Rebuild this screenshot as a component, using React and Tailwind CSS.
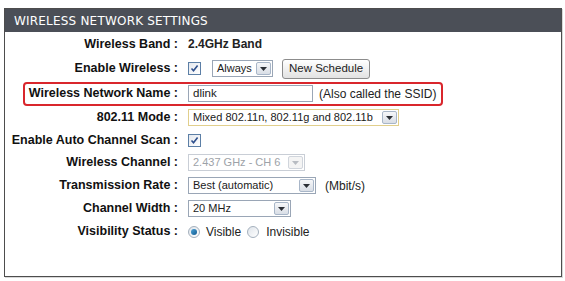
import React from 'react';

const labelFont = { fontFamily: '"Liberation Sans", Arial, sans-serif' };

const Arrow = ({ disabled }) => (
    <span className={`flex items-center justify-center w-[15px] h-[13px] mr-[1px] border rounded-[2px] ${disabled ? 'border-[#d0d5dc] bg-[#f4f4f4]' : 'border-[#a8b6c8] bg-gradient-to-b from-[#f6f7f9] to-[#d9dee6]'}`}>
        <svg width="7" height="4" viewBox="0 0 7 4">
            <path d="M0 0h7L3.5 4z" fill={disabled ? '#b8bcc2' : '#2b2f36'} />
        </svg>
    </span>
);

const Select = ({ value, width, disabled, warm }) => (
    <div
        className={`flex items-center justify-between h-[17px] bg-white border ${warm ? 'border-[#e1cf8c]' : disabled ? 'border-[#c9ced6]' : 'border-[#9aa6b6]'}`}
        style={{ width }}
    >
        <span className={`pl-[4px] text-[11px] leading-none whitespace-nowrap ${disabled ? 'text-[#9da2a8]' : 'text-[#1a1a1a]'}`}>{value}</span>
        <Arrow disabled={disabled} />
    </div>
);

const Checkbox = () => (
    <span className="flex items-center justify-center w-[13px] h-[13px] border border-[#5c7fa6] bg-gradient-to-br from-[#e4e8ee] to-white">
        <svg width="9" height="9" viewBox="0 0 9 9">
            <path d="M1.5 4.5l2 2.2L7.6 1.4" stroke="#2e4f8c" strokeWidth="1.6" fill="none" />
        </svg>
    </span>
);

const Radio = ({ checked }) => (
    <span className="flex items-center justify-center w-[12px] h-[12px] rounded-full border border-[#a4b0bd] bg-gradient-to-br from-[#dfe4ea] to-white">
        {checked && <span className="w-[6px] h-[6px] rounded-full bg-gradient-to-br from-[#4aa2d6] to-[#0f5b91]" />}
    </span>
);

const Row = ({ label, h, children }) => (
    <div className="flex items-center" style={{ height: h }}>
        <div className="w-[173px] shrink-0 text-right text-[12.5px] font-bold text-[#111] whitespace-nowrap" style={labelFont}>{label}</div>
        <div className="ml-[10px] flex items-center">{children}</div>
    </div>
);

const App = () => {
    return (
        <div className="w-[565px] h-[281px] bg-white pt-[8px] pl-[4px]" style={labelFont}>
            <div className="w-[558px] h-[269px] border border-[#4d4d4d] shadow-[1px_1px_0_#d8d8d8]">
                <div className="h-[23px] bg-[#4b4f57] flex items-center pl-[9px]">
                    <span className="text-white text-[12px] tracking-[0.2px]" style={{ fontFamily: '"DejaVu Sans", Verdana, sans-serif' }}>WIRELESS NETWORK SETTINGS</span>
                </div>

                <Row label="Wireless Band :" h={24}>
                    <span className="text-[12px] font-bold text-[#222]">2.4GHz Band</span>
                </Row>

                <Row label="Enable Wireless :" h={25}>
                    <Checkbox />
                    <div className="ml-[11px]"><Select value="Always" width={61} /></div>
                    <button type="button" className="ml-[9px] h-[20px] px-[6px] rounded-[3px] border border-[#8c8c8c] bg-gradient-to-b from-white to-[#e2e2e2] text-[11.5px] text-[#222]">
                        New Schedule
                    </button>
                </Row>

                <div className="relative">
                    <div className="absolute left-[18px] top-[1px] w-[420px] h-[24px] border-2 border-[#d9262c] rounded-[4px] pointer-events-none" />
                    <Row label="Wireless Network Name :" h={25}>
                        <div className="w-[125px] h-[17px] border border-[#9aa6b6] bg-white flex items-center pl-[4px] text-[11.5px] text-[#1a1a1a]">dlink</div>
                        <span className="ml-[6px] text-[12px] text-[#222]">(Also called the SSID)</span>
                    </Row>
                </div>

                <Row label="802.11 Mode :" h={23}>
                    <Select value="Mixed 802.11n, 802.11g and 802.11b" width={211} warm />
                </Row>

                <Row label="Enable Auto Channel Scan :" h={22}>
                    <Checkbox />
                </Row>

                <Row label="Wireless Channel :" h={23}>
                    <Select value="2.437 GHz - CH 6" width={117} disabled />
                </Row>

                <Row label="Transmission Rate :" h={23}>
                    <Select value="Best (automatic)" width={128} />
                    <span className="ml-[9px] text-[12px] text-[#222]">(Mbit/s)</span>
                </Row>

                <Row label="Channel Width :" h={23}>
                    <Select value="20 MHz" width={103} />
                </Row>

                <Row label="Visibility Status :" h={23}>
                    <Radio checked />
                    <span className="ml-[6px] text-[12px] text-[#222]">Visible</span>
                    <span className="ml-[6px]"><Radio /></span>
                    <span className="ml-[7px] text-[12px] text-[#222]">Invisible</span>
                </Row>
            </div>
        </div>
    );
};

export default App;
